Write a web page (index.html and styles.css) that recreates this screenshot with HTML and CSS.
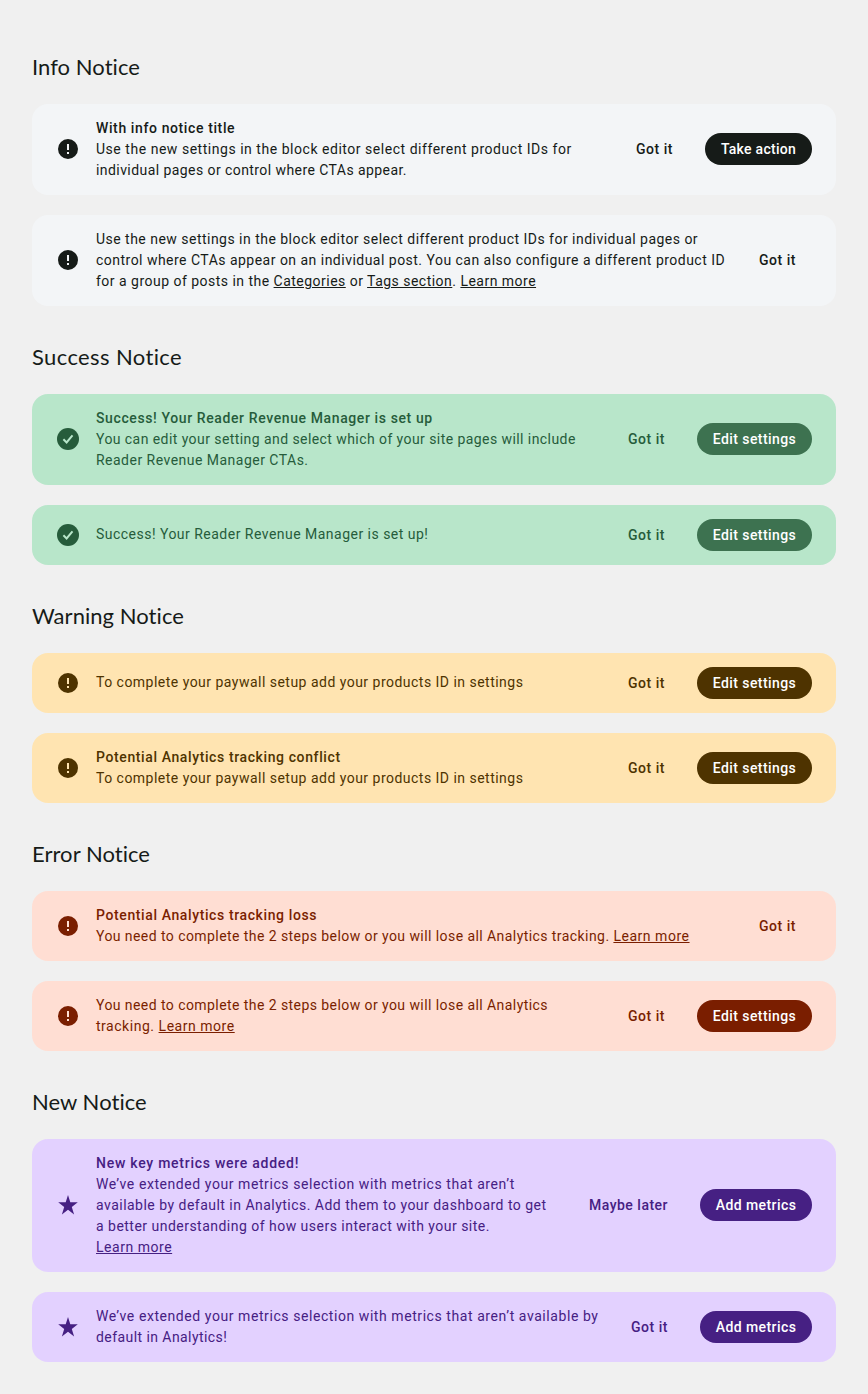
FILE: index.html
```html
<!DOCTYPE html>
<html lang="en">
<head>
<meta charset="utf-8">
<title>Notices</title>
<link rel="stylesheet" href="styles.css">
</head>
<body>
<svg class="defs" width="0" height="0" aria-hidden="true">
  <symbol id="alert" viewBox="0 0 24 24"><path fill="currentColor" fill-rule="evenodd" d="M12 2a10 10 0 1 0 0 20 10 10 0 0 0 0-20zM11 7h2v6h-2zM11 15h2v2h-2z"/></symbol>
  <symbol id="check" viewBox="0 0 24 24"><circle cx="12" cy="12" r="11" fill="currentColor"/><path d="M7.4 12.2l3.2 3.2 5.9-7" fill="none" stroke="#b8e6ca" stroke-width="2"/></symbol>
  <symbol id="star" viewBox="0 0 24 24"><path fill="currentColor" d="M12 1.9l2.3 7.4h7.5l-6 4.6 2.3 7.5-6.1-4.6-6.1 4.6 2.3-7.5-6-4.6h7.5z"/></symbol>
</svg>
<main class="page">
  <section class="group">
    <h2 class="heading">Info Notice</h2>
    <div class="notice info">
      <svg class="icon"><use href="#alert"/></svg>
      <div class="body"><p class="title">With info notice title</p>
        <p class="text"><span class="line l-wide">Use the new settings in the block editor select different product IDs for</span><span class="line l-tight">individual pages or control where CTAs appear.</span></p></div>
      <div class="actions"><button class="btn">Got it</button><button class="btn primary take">Take action</button></div>
    </div>
    <div class="notice info">
      <svg class="icon"><use href="#alert"/></svg>
      <div class="body"><p class="text"><span class="line">Use the new settings in the block editor select different product IDs for individual pages or</span><span class="line">control where CTAs appear on an individual post. You can also configure a different product ID</span><span class="line">for a group of posts in the <a class="link" href="#">Categories</a> or <a class="link" href="#">Tags section</a>. <a class="link" href="#">Learn more</a></span></p></div>
      <div class="actions"><button class="btn">Got it</button></div>
    </div>
  </section>
  <section class="group">
    <h2 class="heading h-wide">Success Notice</h2>
    <div class="notice success">
      <svg class="icon"><use href="#check"/></svg>
      <div class="body"><p class="title">Success! Your Reader Revenue Manager is set up</p>
        <p class="text"><span class="line l-tight">You can edit your setting and select which of your site pages will include</span><span class="line">Reader Revenue Manager CTAs.</span></p></div>
      <div class="actions"><button class="btn">Got it</button><button class="btn primary edit">Edit settings</button></div>
    </div>
    <div class="notice success">
      <svg class="icon"><use href="#check"/></svg>
      <div class="body"><p class="text"><span class="line">Success! Your Reader Revenue Manager is set up!</span></p></div>
      <div class="actions"><button class="btn">Got it</button><button class="btn primary edit">Edit settings</button></div>
    </div>
  </section>
  <section class="group">
    <h2 class="heading">Warning Notice</h2>
    <div class="notice warning">
      <svg class="icon"><use href="#alert"/></svg>
      <div class="body"><p class="text"><span class="line">To complete your paywall setup add your products ID in settings</span></p></div>
      <div class="actions"><button class="btn">Got it</button><button class="btn primary edit">Edit settings</button></div>
    </div>
    <div class="notice warning">
      <svg class="icon"><use href="#alert"/></svg>
      <div class="body"><p class="title">Potential Analytics tracking conflict</p>
        <p class="text"><span class="line">To complete your paywall setup add your products ID in settings</span></p></div>
      <div class="actions"><button class="btn">Got it</button><button class="btn primary edit">Edit settings</button></div>
    </div>
  </section>
  <section class="group">
    <h2 class="heading">Error Notice</h2>
    <div class="notice error">
      <svg class="icon"><use href="#alert"/></svg>
      <div class="body"><p class="title">Potential Analytics tracking loss</p>
        <p class="text"><span class="line l-tight">You need to complete the 2 steps below or you will lose all Analytics tracking. <a class="link l-wide" href="#">Learn more</a></span></p></div>
      <div class="actions"><button class="btn">Got it</button></div>
    </div>
    <div class="notice error">
      <svg class="icon"><use href="#alert"/></svg>
      <div class="body"><p class="text"><span class="line l-tight">You need to complete the 2 steps below or you will lose all Analytics</span><span class="line l-wide">tracking. <a class="link" href="#">Learn more</a></span></p></div>
      <div class="actions"><button class="btn">Got it</button><button class="btn primary edit">Edit settings</button></div>
    </div>
  </section>
  <section class="group">
    <h2 class="heading">New Notice</h2>
    <div class="notice new">
      <svg class="icon"><use href="#star"/></svg>
      <div class="body"><p class="title t-wide">New key metrics were added!</p>
        <p class="text"><span class="line l-wider">We’ve extended your metrics selection with metrics that aren’t</span><span class="line">available by default in Analytics. Add them to your dashboard to get</span><span class="line">a better understanding of how users interact with your site.</span><span class="line l-wide"><a class="link" href="#">Learn more</a></span></p></div>
      <div class="actions"><button class="btn later">Maybe later</button><button class="btn primary add">Add metrics</button></div>
    </div>
    <div class="notice new">
      <svg class="icon"><use href="#star"/></svg>
      <div class="body"><p class="text"><span class="line l-wider">We’ve extended your metrics selection with metrics that aren’t available by</span><span class="line l-tight">default in Analytics!</span></p></div>
      <div class="actions"><button class="btn">Got it</button><button class="btn primary add">Add metrics</button></div>
    </div>
  </section>
</main>
</body>
</html>
```
FILE: styles.css
```css
* { box-sizing: border-box; }
body { margin: 0; background: #f0f0f0; color: #161b18; font-family: Roboto, sans-serif; }
.defs { display: block; }
.page { display: flex; flex-direction: column; gap: 37px; padding: 53px 32px 32px; }
.group { display: flex; flex-direction: column; gap: 20px; }
.heading { margin: 0 0 3px; font: 400 22px/28px Lato, sans-serif; letter-spacing: 0.05px; font-variant-ligatures: none; }
.h-wide { letter-spacing: 0.38px; }
.notice { display: flex; align-items: center; gap: 16px; padding: 14px 24px; border-radius: 16px; background: var(--bg); color: var(--fg); }
.notice > * { margin: -0.25px 0 0.25px; }
.info { --bg: #f3f5f7; --fg: #161b18; --btn: #161b18; }
.success { --bg: #b8e6ca; --fg: #265c3b; --btn: #3d7250; }
.warning { --bg: #ffe4b1; --fg: #4e3300; --btn: #4e3300; }
.error { --bg: #ffded3; --fg: #7a1e00; --btn: #7a1e00; }
.new { --bg: #e3d1ff; --fg: #462083; --btn: #462083; }
.icon { flex: none; width: 24px; height: 24px; }
.body { flex: 1; min-width: 0; font-size: 14px; line-height: 21px; }
.title, .text { margin: 0; }
.title { font-weight: 500; letter-spacing: 0.61px; }
.t-wide { letter-spacing: 0.74px; }
.text { letter-spacing: 0.48px; }
.line { display: block; white-space: nowrap; }
.l-wider { letter-spacing: 0.57px; }
.l-wide { letter-spacing: 0.53px; }
.l-tight { letter-spacing: 0.43px; }
.link { color: inherit; text-decoration: underline; text-underline-offset: 1px; }
.actions { flex: none; display: flex; gap: 16px; }
.btn { width: 69px; height: 32px; padding: 0; border: 0; border-radius: 16px; background: none; color: inherit; font: 500 14px/20px Roboto, sans-serif; letter-spacing: 0.5px; white-space: nowrap; }
.primary { background: var(--btn); color: #fff; letter-spacing: 0.42px; }
.take { width: 107px; letter-spacing: 0.28px; }
.edit { width: 115px; }
.add { width: 112px; }
.later { width: 111px; }
```
